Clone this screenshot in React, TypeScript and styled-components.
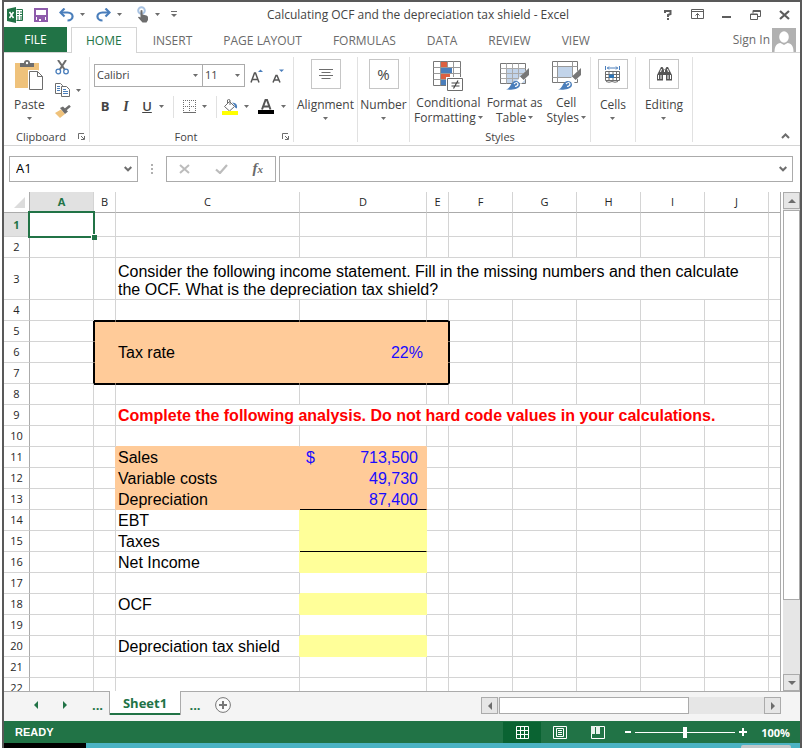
import React from "react";
import styled, { createGlobalStyle, css } from "styled-components";

const GREEN = "#217346";
const LINE = "#d4d4d4";
const BORDER = "#ababab";
const INK = "#444444";
const ORANGE = "#ffcb99";
const YELLOW = "#ffff99";
const BLUE = "#1a0dff";
const UI = '"Open Sans", "Noto Sans", sans-serif';
const SHEET = '"Liberation Sans", Arial, sans-serif';

const GlobalStyle = createGlobalStyle`
  *, *::before, *::after { box-sizing: border-box; }
  body { margin: 0; background: #ffffff; }
  button, input, select { font: inherit; color: inherit; margin: 0; }
  svg { display: block; flex: none; }
`;

/* ---------- frame ---------- */

const Frame = styled.div`
  height: 100vh;
  padding: 0 1px 1px 2px;
  font-family: ${UI};
  font-size: 12px;
  line-height: 15px;
  color: ${INK};
  overflow: hidden;
`;

const Window = styled.main`
  height: 100%;
  display: flex;
  flex-direction: column;
  background: #ffffff;
  border: solid #595959;
  border-width: 2px 2px 0 2px;
`;

const PlainButton = styled.button`
  display: flex;
  align-items: center;
  justify-content: center;
  padding: 0;
  border: 0;
  background: none;
  white-space: nowrap;
`;

/* ---------- title bar ---------- */

const TitleBar = styled.header`
  flex: none;
  display: flex;
  align-items: center;
  height: 25px;
`;

const QuickAccess = styled.div`
  display: flex;
  align-items: center;
  gap: 11px;
  width: 176px;
  padding-left: 3px;
`;

const QuickItem = styled.div`
  display: flex;
  align-items: center;
  gap: 6px;
`;

const Title = styled.h1`
  flex: 1;
  margin: 0;
  padding-right: 8px;
  font-size: 12px;
  font-weight: 400;
  text-align: center;
  white-space: nowrap;
`;

const WindowButtons = styled.div`
  display: flex;
  align-items: center;
  justify-content: space-between;
  width: 136px;
  padding: 0 10px 0 0;
`;

/* ---------- ribbon tabs ---------- */

const TabStrip = styled.nav`
  flex: none;
  display: flex;
  gap: 1px;
  height: 26px;
  border-bottom: 1px solid ${LINE};
`;

const FileTab = styled(PlainButton)`
  width: 63px;
  height: 25px;
  margin-right: 3px;
  background: ${GREEN};
  color: #ffffff;
`;

const RibbonTab = styled(PlainButton)<{ $active?: boolean }>`
  height: 26px;
  padding: 0 15px;
  color: #6a6a6a;
  ${(p) =>
    p.$active &&
    css`
      padding: 0 14px;
      color: ${GREEN};
      background: #ffffff;
      border: 1px solid ${LINE};
      border-bottom: 0;
    `}
`;

const Account = styled.a`
  display: flex;
  align-items: center;
  gap: 2px;
  height: 25px;
  margin-left: auto;
  padding-right: 4px;
  color: #6a6a6a;
  text-decoration: none;
  white-space: nowrap;
`;

/* ---------- ribbon ---------- */

const Ribbon = styled.section`
  flex: none;
  display: flex;
  height: 93px;
  padding: 4px 0 3px;
  border-bottom: 1px solid ${LINE};
`;

const Group = styled.div<{ $width: number }>`
  flex: none;
  display: flex;
  flex-direction: column;
  justify-content: space-between;
  width: ${(p) => p.$width}px;
  border-right: 1px solid #e1e1e1;
`;

const GroupBody = styled.div`
  display: flex;
  justify-content: center;
  gap: 4px;
`;

const GroupLabel = styled.div`
  display: flex;
  align-items: center;
  height: 12px;
  font-size: 11px;
  text-align: center;

  svg {
    margin-right: 4px;
  }
`;

const GroupName = styled.span`
  flex: 1;
`;

const ClipboardBody = styled.div`
  display: flex;
  gap: 10px;
  padding: 3px 0 0 10px;
`;

const PasteButton = styled(PlainButton)`
  flex-direction: column;
  gap: 6px;
  justify-content: flex-start;
`;

const IconStack = styled.div`
  display: flex;
  flex-direction: column;
  align-items: flex-start;
  gap: 8px;
`;

const FontBody = styled.div`
  display: flex;
  flex-direction: column;
  gap: 8px;
  padding: 7px 0 0 4px;
`;

const FontRow = styled.div`
  display: flex;
  align-items: center;
  height: 23px;
`;

const PickerBox = styled.label<{ $width: number }>`
  position: relative;
  display: flex;
  align-items: center;
  width: ${(p) => p.$width}px;
  height: 23px;
  margin-right: -1px;
  border: 1px solid ${BORDER};
  font-size: 11px;

  select {
    width: 100%;
    height: 100%;
    padding: 0 0 2px 2px;
    border: 0;
    background: transparent;
    appearance: none;
  }
  svg {
    position: absolute;
    right: 4px;
  }
`;

const SizeButtons = styled.div`
  display: flex;
  gap: 9px;
  padding-left: 6px;
`;

const FormatRow = styled(FontRow)`
  gap: 9px;
  padding-left: 5px;
`;

const FillGroup = styled.div`
  display: flex;
  align-items: center;
  gap: 5px;
`;

const StyleLetter = styled(PlainButton)<{ $kind: "bold" | "italic" | "underline" }>`
  width: 12px;
  font-size: 13px;
  font-weight: 700;
  ${(p) => p.$kind === "italic" && "font-family: 'Liberation Serif', serif; font-style: italic; font-size: 14px;"}
  ${(p) => p.$kind === "underline" && "text-decoration: underline; font-weight: 600;"}
`;

const VerticalRule = styled.span`
  width: 1px;
  height: 22px;
  background: #e1e1e1;
`;

const BoxedButton = styled(PlainButton)`
  flex-direction: column;
  gap: 8px;
  padding-top: 2px;
`;

const IconBox = styled.span`
  display: flex;
  align-items: center;
  justify-content: center;
  width: 30px;
  height: 30px;
  border: 1px solid #c6c6c6;
  font-size: 15px;
`;

const BoxedLabel = styled.span`
  display: flex;
  flex-direction: column;
  align-items: center;
  gap: 5px;
`;

const TallButton = styled(PlainButton)`
  flex-direction: column;
  gap: 4px;
  padding-top: 3px;
`;

const TallLabel = styled.span`
  display: block;
  text-align: center;
`;

const TallLine = styled.span`
  display: flex;
  align-items: center;
  justify-content: center;
  gap: 2px;
`;

const CollapseButton = styled(PlainButton)`
  align-self: flex-end;
  margin: 0 10px 0 auto;
  height: 12px;
`;

/* ---------- formula bar ---------- */

const FormulaBar = styled.section`
  flex: none;
  display: flex;
  align-items: center;
  padding: 10px 7px 10px 5px;
`;

const Field = styled.div<{ $width?: number }>`
  display: flex;
  align-items: center;
  ${(p) => (p.$width ? `width: ${p.$width}px;` : "flex: 1;")}
  height: 26px;
  padding: 0 5px 0 6px;
  border: 1px solid ${BORDER};

  input {
    flex: 1;
    min-width: 0;
    padding: 0 0 2px 0;
    border: 0;
    outline: 0;
    background: transparent;
    color: #000000;
    font-size: 13px;
  }
`;

const DotHandle = styled.span`
  display: flex;
  justify-content: center;
  width: 28px;
`;

const EntryButtons = styled.div`
  display: flex;
  align-items: center;
  justify-content: space-between;
  width: 110px;
  height: 26px;
  margin-right: 3px;
  padding: 0 12px;
  border: 1px solid ${BORDER};
`;

/* ---------- sheet ---------- */

const SheetArea = styled.section`
  flex: 1;
  min-height: 0;
  display: flex;
  gap: 2px;
  border-bottom: 1px solid ${BORDER};
`;

const GridClip = styled.div`
  flex: 1;
  min-width: 0;
  overflow: hidden;
  border-right: 1px solid ${BORDER};
`;

const Grid = styled.table`
  width: 100%;
  table-layout: fixed;
  border-collapse: separate;
  border-spacing: 0;
  font-family: ${SHEET};
  font-size: 16px;
  line-height: 18px;
  color: #000000;
`;

const Col = styled.col<{ $width?: number }>`
  ${(p) => p.$width && `width: ${p.$width}px;`}
`;

const Row = styled.tr<{ $height: number }>`
  height: ${(p) => p.$height}px;
`;

const HeadCell = styled.th<{ $on?: boolean; $side?: boolean }>`
  padding: 0;
  border-right: 1px solid ${(p) => (p.$side ? BORDER : LINE)};
  border-bottom: 1px solid ${(p) => (p.$side ? LINE : BORDER)};
  background: ${(p) => (p.$on ? "#e1e1e1" : "#ffffff")};
  color: ${(p) => (p.$on ? GREEN : "#262626")};
  font-family: ${UI};
  font-size: 11px;
  font-weight: ${(p) => (p.$on ? 700 : 400)};
  line-height: 14px;
  text-align: center;

  &:last-child {
    border-right: 0;
  }
`;

const CornerCell = styled.td`
  padding: 0 4px 0 0;
  border-right: 1px solid ${BORDER};
  border-bottom: 1px solid ${BORDER};

  svg {
    margin-left: auto;
  }
`;

type CellStyle = {
  $fill?: string;
  $ink?: string;
  $bold?: boolean;
  $align?: "left" | "right";
  $inset?: number;
  $t?: string;
  $r?: string;
  $b?: string;
  $l?: string;
};

const Cell = styled.td<CellStyle>`
  position: relative;
  padding: 0 ${(p) => p.$inset ?? 3}px 0 2px;
  background: ${(p) => p.$fill ?? "transparent"};
  color: ${(p) => p.$ink ?? "#000000"};
  font-weight: ${(p) => (p.$bold ? 700 : 400)};
  text-align: ${(p) => p.$align ?? "left"};
  vertical-align: bottom;
  white-space: nowrap;
  border-right: 1px solid ${(p) => p.$r ?? LINE};
  border-bottom: 1px solid ${(p) => p.$b ?? LINE};
  ${(p) => p.$t && `border-top: 1px solid ${p.$t};`}
  ${(p) => p.$l && `border-left: 1px solid ${p.$l};`}

  &:last-child {
    border-right: 0;
  }
`;

const Accounting = styled.span`
  display: flex;
  justify-content: space-between;
  padding-left: 4px;
`;

const Selection = styled.span`
  position: absolute;
  z-index: 1;
  inset: -2px;
  border: 2px solid ${GREEN};

  &::after {
    content: "";
    position: absolute;
    right: -4px;
    bottom: -4px;
    width: 6px;
    height: 6px;
    background: ${GREEN};
    border: solid #ffffff;
    border-width: 1px 0 0 1px;
  }
`;

const ScrollColumn = styled.div`
  display: flex;
  flex-direction: column;
  width: 17px;
  background: #e6e6e6;
`;

const ScrollButton = styled(PlainButton)`
  flex: none;
  width: 17px;
  height: 17px;
  border: 1px solid ${BORDER};
  background: #e6e6e6;
`;

const ScrollTrack = styled.div<{ $row?: boolean }>`
  flex: 1;
  display: flex;
  flex-direction: ${(p) => (p.$row ? "row" : "column")};
  padding: ${(p) => (p.$row ? "0 0 0 1px" : "1px 0 0")};
`;

const ScrollThumb = styled.div<{ $size: string }>`
  flex: 0 0 ${(p) => p.$size};
  background: #ffffff;
  border: 1px solid ${BORDER};
`;

/* ---------- sheet tabs ---------- */

const SheetBar = styled.section`
  flex: none;
  display: flex;
  height: 29px;
  padding: 0 19px 0 24px;
  background: #f4f4f4;
  color: ${GREEN};
  font-size: 13px;
  font-weight: 700;
`;

const NavButton = styled(PlainButton)<{ $width: number }>`
  width: ${(p) => p.$width}px;
  height: 26px;
`;

const SheetTab = styled(PlainButton)`
  width: 72px;
  height: 24px;
  margin-top: -1px;
  background: #ffffff;
  border: solid ${BORDER};
  border-width: 0 1px;
  box-shadow: inset 0 -2px 0 ${GREEN};
`;

const ScrollRow = styled.div`
  display: flex;
  width: 300px;
  height: 17px;
  margin: 5px 0 0 auto;
  background: #e6e6e6;
`;

/* ---------- status bar ---------- */

const StatusBar = styled.footer`
  flex: none;
  display: flex;
  align-items: center;
  height: 22px;
  padding: 0 10px 0 11px;
  background: ${GREEN};
  color: #ffffff;
  font-size: 11px;
`;

const Ready = styled.span`
  margin-right: auto;
  font-family: ${SHEET};
  font-weight: 700;
`;

const ViewButton = styled(PlainButton)<{ $on?: boolean }>`
  width: 38px;
  height: 21px;
  background: ${(p) => (p.$on ? "#0a6332" : "transparent")};
`;

const ZoomControl = styled.div`
  display: flex;
  align-items: center;
  gap: 4px;
  margin-left: 8px;
`;

const ZoomRange = styled.input`
  width: 100px;
  height: 12px;
  appearance: none;
  background: linear-gradient(#ffffff, #ffffff) center / 100% 1px no-repeat;

  &::-webkit-slider-thumb {
    appearance: none;
    width: 4px;
    height: 11px;
    background: #ffffff;
  }
`;

const ZoomValue = styled.span`
  width: 43px;
  font-weight: 700;
  text-align: right;
`;

const Desktop = styled.div`
  flex: none;
  display: flex;
  justify-content: space-between;
  align-items: flex-end;
  height: 5px;
  padding-right: 9px;
  background: linear-gradient(90deg, #000000 82px, #4bb3c3 82px);

  &::after {
    content: "";
    width: 50px;
    height: 3px;
    margin-left: auto;
    border-radius: 2px 2px 0 0;
    background: #c3c8ca;
  }
`;

/* ---------- icons ---------- */

const Caret = ({ color = "#6d6d6d" }: { color?: string }) => (
  <svg width="5" height="3" viewBox="0 0 5 3"><path d="M0 0h5L2.500 3z" fill={color} /></svg>
);

const ExcelIcon = () => (
  <svg width="16" height="16" viewBox="0 0 16 16">
    <path d="M0 2 9 0v16L0 14z" fill={GREEN} />
    <path d="M9.500 2.500h6v11h-6" fill="#fff" stroke={GREEN} />
    <path d="M10 5h2M13 5h2M10 7.500h2M13 7.500h2M10 10h2M13 10h2M10 12h2M13 12h2" stroke={GREEN} strokeWidth="1.200" />
    <path d="M2.500 5 6.500 11M6.500 5 2.500 11" stroke="#fff" strokeWidth="1.500" />
  </svg>
);

const SaveIcon = () => (
  <svg width="14" height="14" viewBox="0 0 14 14">
    <path d="M1 1h12v12H1z" fill="#fff" stroke="#8e5bab" strokeWidth="2" />
    <path d="M1 8h12" stroke="#8e5bab" strokeWidth="2" />
    <path d="M3 9h8v5H3z" fill="#8e5bab" />
    <path d="M5 11h2v2H5z" fill="#fff" />
  </svg>
);

const UndoIcon = ({ flip }: { flip?: boolean }) => (
  <svg width="15" height="14" viewBox="0 0 15 14">
    <g transform={flip ? "matrix(-1 0 0 1 15 0)" : undefined} fill="none" stroke="#4a7ebb" strokeWidth="2.200">
      <path d="M5.500 0.500 1.500 4.500 5.500 8.500" />
      <path d="M2 4.500h6.500c7 0 6.500 8 0 8" />
    </g>
  </svg>
);

const TouchIcon = () => (
  <svg width="16" height="17" viewBox="-4 0 16 17">
    <circle cx="4.500" cy="4.500" r="3.300" fill="none" stroke="#a9c3e2" strokeWidth="2" />
    <path d="M3.500 4.500q1-1 2 0v4l4 1q1.500.5 1.500 2V14l-1.500 2.500h-4L1 11.500q.5-1.500 2.500 0z" fill="#6d6d6d" />
  </svg>
);

const CustomizeIcon = () => (
  <svg width="6" height="7" viewBox="0 0 6 7"><path d="M0 .5h6" stroke="#6d6d6d" /><path d="M0 3h6L3 6z" fill="#6d6d6d" /></svg>
);

const HelpIcon = () => (
  <svg width="8" height="10" viewBox="0 0 8 10">
    <path d="M1 3V1h5.500v3L4 5v2" fill="none" stroke="#5d5d5d" strokeWidth="2" /><path d="M3 8h2v2H3z" fill="#5d5d5d" />
  </svg>
);

const RibbonOptionsIcon = () => (
  <svg width="13" height="11" viewBox="0 0 13 11" fill="none" stroke="#5d5d5d">
    <path d="M.5.5h12v9H.5zM.5 2.500h12M6.500 9V4.500M4.500 6.500l2-2 2 2" />
  </svg>
);

const MinimizeIcon = () => (
  <svg width="9" height="8" viewBox="0 0 9 8"><path d="M0 5h9v2H0z" fill="#5d5d5d" /></svg>
);

const RestoreIcon = () => (
  <svg width="11" height="10" viewBox="0 0 11 10" fill="none" stroke="#5d5d5d">
    <path d="M.5 4h7v5.500h-7zM.5 4.500h7" /><path d="M3 3.500V.5h7.500v6H8M3 1.500h7.500" />
  </svg>
);

const CloseIcon = () => (
  <svg width="11" height="10" viewBox="0 0 11 10"><path d="M1 1l9 8M10 1 1 9" stroke="#5d5d5d" strokeWidth="2.200" /></svg>
);

const AvatarIcon = () => (
  <svg width="24" height="24" viewBox="0 0 24 24">
    <path d="M0 0h24v24H0z" fill="#b1b1b1" />
    <ellipse cx="12" cy="9" rx="4.800" ry="5.800" fill="#fff" />
    <path d="M2.500 24c0-6 2-8.500 6-9l3.500 2 3.500-2c4 .5 6 3 6 9z" fill="#fff" />
  </svg>
);

const PasteIcon = () => (
  <svg width="29" height="31" viewBox="0 0 29 31">
    <path d="M0 3h24v25H0z" fill="#efc27b" />
    <path d="M5 7V3h4q0-3 3-3t3 3h4v4z" fill="#6d6d6d" />
    <circle cx="12" cy="3" r="1.200" fill="#fff" />
    <path d="M14.500 11.500h8l5 5v13h-13z" fill="#fff" stroke="#fff" strokeWidth="3" />
    <path d="M14.500 11.500h8l5 5v13h-13zM22.500 11.500v5h5" fill="#fff" stroke="#6d6d6d" />
  </svg>
);

const CutIcon = () => (
  <svg width="15" height="15" viewBox="0 0 15 15" fill="none">
    <path d="M3 0 10 10M11 0 4.500 10" stroke="#6d6d6d" strokeWidth="2" />
    <circle cx="3.300" cy="11.500" r="2.300" stroke="#4a7ebb" strokeWidth="1.300" />
    <circle cx="11" cy="11.500" r="2.300" stroke="#4a7ebb" strokeWidth="1.300" />
  </svg>
);

const CopyIcon = () => (
  <svg width="15" height="14" viewBox="0 0 15 14" fill="#fff" stroke="#6d6d6d">
    <path d="M.5.5h5l2 2v8h-7z" /><path d="M2 3.500h3M2 5.500h3M2 7.500h3" stroke="#4a7ebb" />
    <path d="M6.500 3.500h5l3 3v7h-8z" /><path d="M8 6.500h3M8 8.500h5M8 10.500h5" stroke="#4a7ebb" />
  </svg>
);

const PainterIcon = () => (
  <svg width="16" height="13" viewBox="0 0 16 13">
    <path d="M0 8 6 4.500l4 4.500-5 4z" fill="#efc27b" />
    <path d="M5 3 8 1.500l5 5L10 9z" fill="#6d6d6d" />
    <path d="M10.500 4.500 15 .8" stroke="#6d6d6d" strokeWidth="2.500" />
  </svg>
);

const LauncherIcon = () => (
  <svg width="7" height="7" viewBox="0 0 7 7" fill="none" stroke="#6d6d6d"><path d="M.5 6V.5H6M3 3l3 3M6.500 3v3.500H3" /></svg>
);

const SizeIcon = ({ up }: { up?: boolean }) => (
  <svg width={up ? 13 : 12} height="14" viewBox={up ? "0 0 13 14" : "0 0 12 14"}>
    <path d={up ? "M1 13.500 4.500 4h1L9 13.500M2.500 10.500h5" : "M1 13.500 4 6.500h1L8 13.500M2.500 11h4.500"} fill="none" stroke="#555" strokeWidth="1.500" />
    <path d={up ? "M8 3h5L10.500.5z" : "M7 .5h5L9.500 3z"} fill="#4a7ebb" />
  </svg>
);

const BordersIcon = () => (
  <svg width="13" height="13" viewBox="0 0 13 13" stroke="#6d6d6d">
    <path d="M0 .5h13M0 6.500h13M.5 0v12M6.500 0v12M12.500 0v12" strokeDasharray="1 1" /><path d="M0 12.500h13" />
  </svg>
);

const FillIcon = () => (
  <svg width="17" height="16" viewBox="0 0 17 16">
    <path d="M2.500 7.500 7.500 2.500l5 5-5 4.500z" fill="#fff" stroke="#6d6d6d" />
    <path d="M5.500 5V1q1-1 2.500 0v5" fill="none" stroke="#6d6d6d" />
    <path d="M10 3.500q6 0 5 6l-2-1q0-3-3-5z" fill="#4a7ebb" />
    <path d="M0 12h16v4H0z" fill="#ffff00" />
  </svg>
);

const FontColorIcon = () => (
  <svg width="17" height="15" viewBox="0 0 17 15">
    <path d="M4 10.500 7.500 1h1.500l3.500 9.500M5.500 7.500h6" fill="none" stroke="#555" strokeWidth="2" />
    <path d="M0 11h16v4H0z" fill="#000" />
  </svg>
);

const AlignIcon = () => (
  <svg width="14" height="12" viewBox="0 0 14 12"><path d="M0 1.500h14M2.500 4.500h9M0 7.500h14M2.500 10.500h9" stroke="#6d6d6d" /></svg>
);

const ConditionalIcon = () => (
  <svg width="31" height="31" viewBox="0 0 31 31">
    <path d="M.5 1.500h27v24H.5z" fill="#fff" stroke="#777" />
    <path d="M8 2h6v5H8zM8 14h9v5H8z" fill="#dc6040" />
    <path d="M8 8h11v5H8zM8 20h5v5H8z" fill="#4a7ebb" />
    <path d="M.5 7.500h27M.5 13.500h27M.5 19.500h27M7.500 1.500v24M14.500 1.500v6M20.500 1.500v24" fill="none" stroke="#999" />
    <path d="M14.500 18.500h15v12h-15z" fill="#fff" stroke="#fff" strokeWidth="3" />
    <path d="M14.500 18.500h15v12h-15z" fill="#fff" stroke="#6d6d6d" />
    <path d="M18.500 23h8M18.500 26h8M25 20.500l-4.500 8" stroke="#444" strokeWidth="1.200" />
  </svg>
);

const Brush = () => (
  <>
    <path d="M31 5.500 18 21l4 3L31 14z" fill="#fff" />
    <path d="M30 8v7l-5.500 5-3.500-3.500z" fill="#777" />
    <path d="M20.500 17.500l3.500 3.500" stroke="#fff" strokeWidth="1.500" />
    <path d="M7 29.500c5-1 4-7 9-8.500 4-.5 6 3 4.500 5.500-2 3-8 3.500-13.500 3z" fill="#4a7ebb" />
    <path d="M15 24q3-3 4 0 0 2-3 2.500" fill="none" stroke="#fff" strokeWidth="1.200" />
  </>
);

const FormatTableIcon = () => (
  <svg width="31" height="31" viewBox="0 0 31 31">
    <path d="M1.500 3.500h25v20h-25z" fill="#fff" stroke="#777" />
    <path d="M8 9h18v14H8z" fill="#c2d4ea" />
    <path d="M1.500 8.500h25M1.500 13.500h25M1.500 18.500h25M7.500 3.500v20M13.500 3.500v20M19.500 3.500v20" stroke="#aaa" />
    <Brush />
  </svg>
);

const CellStylesIcon = () => (
  <svg width="31" height="31" viewBox="0 0 31 31">
    <path d="M1.500 1.500h25v21h-25z" fill="#fff" stroke="#777" />
    <path d="M7 7h14v10H7z" fill="#c2d4ea" />
    <path d="M1.500 6.500h25M1.500 17.500h25M6.500 1.500v21M21.500 1.500v21" stroke="#999" />
    <Brush />
  </svg>
);

const CellsIcon = () => (
  <svg width="16" height="17" viewBox="0 0 16 17" fill="none">
    <path d="M.5 0v4M14.500 0v4M2 2h11M4 .5 2.500 2 4 3.500M11 .5 12.500 2 11 3.500" stroke="#4a7ebb" />
    <path d="M.5 5.500h14v9H.5zM.5 8.500h14M.5 11.500h14M4 5.500v9M8 5.500v9M11.500 5.500v9M1 15.500q3 1.500 6 0 3 1.500 6 0" stroke="#6d6d6d" />
    <path d="M4 8.500h5V12H4z" fill="#2e75b6" />
  </svg>
);

const FindIcon = () => (
  <svg width="15" height="14" viewBox="0 0 15 14">
    <path d="M3 2 4 0h1.500L6.500 1.500v1h2v-1L9.500 0H11l1 2 3 6v5.500H9V8H6v5.500H0V8z" fill="#555" />
    <path d="M1.500 8v4M4 8v4M11 8v4M13.500 8v4M7.500 3v2M4.500 2 3.500 5M10.500 2l1 3" stroke="#fff" />
  </svg>
);

const CollapseIcon = () => (
  <svg width="9" height="6" viewBox="0 0 9 6"><path d="M1 5l3.500-3.500L8 5" fill="none" stroke="#6d6d6d" strokeWidth="2" /></svg>
);

const ChevronIcon = () => (
  <svg width="8" height="6" viewBox="0 0 8 6"><path d="M.7 1 4 4.300 7.300 1" fill="none" stroke="#6d6d6d" strokeWidth="2" /></svg>
);

const DotsIcon = () => (
  <svg width="2" height="10" viewBox="0 0 2 10"><path d="M0 0h2v2H0zM0 4h2v2H0zM0 8h2v2H0z" fill="#b0b0b0" /></svg>
);

const CancelIcon = () => (
  <svg width="11" height="10" viewBox="0 0 11 10"><path d="M1 1l9 8M10 1 1 9" stroke="#bcbcbc" strokeWidth="2" /></svg>
);

const ConfirmIcon = () => (
  <svg width="13" height="10" viewBox="0 0 13 10"><path d="M1 5.500 5 9l7-8" fill="none" stroke="#bcbcbc" strokeWidth="2.200" /></svg>
);

const FunctionMark = styled.span`
  font-family: "Liberation Serif", serif;
  font-size: 15px;
  font-style: italic;
  font-weight: 700;
  color: #6a6a6a;

  small {
    font-size: 11px;
  }
`;

const Triangle = ({ d, color = "#6d6d6d" }: { d: "up" | "down" | "left" | "right"; color?: string }) => {
  const paths = { up: "M0 6h8L4 2z", down: "M0 2h8L4 6z", left: "M6 0v8L2 4z", right: "M2 0v8l4-4z" };
  return <svg width="8" height="8" viewBox="0 0 8 8"><path d={paths[d]} fill={color} /></svg>;
};

const AddIcon = () => (
  <svg width="16" height="16" viewBox="0 0 16 16" fill="none" stroke="#777">
    <circle cx="8" cy="8" r="7.400" fill="#fafafa" /><path d="M8 4v8M4 8h8" strokeWidth="2" />
  </svg>
);

const NormalViewIcon = () => (
  <svg width="13" height="13" viewBox="0 0 13 13" fill="none" stroke="#fff"><path d="M.5.500h12v12H.5zM.5 4.500h12M.5 8.500h12M4.500.500v12M8.500.500v12" /></svg>
);

const PageViewIcon = () => (
  <svg width="14" height="13" viewBox="0 0 14 13" fill="none" stroke="#fff"><path d="M.5.500h13v12H.5zM3.500 2.500h7v8h-7zM5 4.500h4M5 6.500h4M5 8.500h4" /></svg>
);

const BreakViewIcon = () => (
  <svg width="14" height="13" viewBox="0 0 14 13"><path d="M.5.500h13v12H.5z" fill="none" stroke="#fff" /><path d="M0 0h4v8H0zM5 0h4v8H5z" fill="#e9f1ec" /></svg>
);

const MinusIcon = () => <svg width="6" height="2" viewBox="0 0 6 2"><path d="M0 0h6v2H0z" fill="#fff" /></svg>;
const PlusIcon = () => <svg width="8" height="8" viewBox="0 0 8 8"><path d="M3 0h2v3h3v2H5v3H3V5H0V3h3z" fill="#fff" /></svg>;

/* ---------- sheet data ---------- */

type CellSpec = CellStyle & { text?: React.ReactNode; span?: number };

const COLUMNS: [string, number | undefined][] = [
  ["A", 64], ["B", 22], ["C", 184], ["D", 127], ["E", 22],
  ["F", 64], ["G", 64], ["H", 64], ["I", 64], ["J", 64], ["", undefined],
];

const BLACK = "#000000";
const input = { $fill: ORANGE, $r: ORANGE, $b: ORANGE };
const amount = (text: React.ReactNode): CellSpec => ({ ...input, text, $ink: BLUE, $align: "right", $inset: 8 });
const answer: CellSpec = { $fill: YELLOW, $r: YELLOW, $b: YELLOW };
const beforeAnswer = (text: string): CellSpec => ({ text, $r: YELLOW });

const boxRow = (pos: "top" | "middle" | "bottom", c: CellSpec = {}, d: CellSpec = {}): Record<string, CellSpec> => {
  const edge: CellStyle = {
    $fill: ORANGE,
    $r: ORANGE,
    $b: pos === "bottom" ? BLACK : ORANGE,
    $t: pos === "top" ? BLACK : undefined,
  };
  return {
    A: { $r: BLACK },
    B: { ...edge, $l: BLACK },
    C: { ...edge, ...c },
    D: { ...edge, ...d },
    E: { ...edge, $r: BLACK },
    F: { $l: BLACK },
  };
};

const under = (color: string, keys: string): Record<string, CellSpec> =>
  Object.fromEntries([...keys].map((k) => [k, { $b: color }]));

const CELLS: Record<number, Record<string, CellSpec>> = {
  1: { A: { text: <Selection /> } },
  3: {
    C: {
      span: 8,
      text: (
        <>
          Consider the following income statement. Fill in the missing numbers and then calculate
          <br />
          the OCF. What is the depreciation tax shield?
        </>
      ),
    },
  },
  4: under(BLACK, "BCDE"),
  5: boxRow("top"),
  6: boxRow("middle", { text: "Tax rate" }, { text: "22%", $ink: BLUE, $align: "right" }),
  7: boxRow("bottom"),
  8: Object.fromEntries([..."BCDE"].map((k) => [k, { $t: BLACK }])),
  9: {
    C: { span: 8, $ink: "#ff0000", $bold: true, text: "Complete the following analysis. Do not hard code values in your calculations." },
  },
  10: under(ORANGE, "CD"),
  11: {
    B: { $r: ORANGE },
    C: { ...input, text: "Sales" },
    D: amount(<Accounting><span>$</span><span>713,500</span></Accounting>),
  },
  12: { B: { $r: ORANGE }, C: { ...input, text: "Variable costs" }, D: amount("49,730") },
  13: { B: { $r: ORANGE }, C: { ...input, text: "Depreciation" }, D: { ...amount("87,400"), $b: BLACK } },
  14: { C: beforeAnswer("EBT"), D: answer },
  15: { C: beforeAnswer("Taxes"), D: { ...answer, $b: BLACK } },
  16: { C: beforeAnswer("Net Income"), D: answer },
  17: under(YELLOW, "D"),
  18: { C: beforeAnswer("OCF"), D: answer },
  19: under(YELLOW, "D"),
  20: { C: beforeAnswer("Depreciation tax shield"), D: answer },
};

const ROW_HEIGHTS: Record<number, number> = { 1: 24, 3: 42 };

const Worksheet = () => (
  <Grid aria-label="Sheet1">
    <colgroup>
      <Col $width={26} />
      {COLUMNS.map(([name, width]) => <Col key={name} $width={width} />)}
    </colgroup>
    <thead>
      <Row $height={21}>
        <CornerCell><svg width="11" height="11" viewBox="0 0 11 11"><path d="M11 0v11H0z" fill="#dcdcdc" /></svg></CornerCell>
        {COLUMNS.map(([name]) => <HeadCell key={name} scope="col" $on={name === "A"}>{name}</HeadCell>)}
      </Row>
    </thead>
    <tbody>
      {Array.from({ length: 22 }, (_, i) => i + 1).map((n) => {
        const cells = CELLS[n] ?? {};
        let skip = 0;
        return (
          <Row key={n} $height={ROW_HEIGHTS[n] ?? 21}>
            <HeadCell scope="row" $side $on={n === 1}>{n}</HeadCell>
            {COLUMNS.map(([name]) => {
              if (skip > 0) {
                skip -= 1;
                return null;
              }
              const { text, span, ...look } = cells[name] ?? {};
              skip = (span ?? 1) - 1;
              return <Cell key={name} colSpan={span} {...look}>{text}</Cell>;
            })}
          </Row>
        );
      })}
    </tbody>
  </Grid>
);

/* ---------- app ---------- */

const TABS = ["HOME", "INSERT", "PAGE LAYOUT", "FORMULAS", "DATA", "REVIEW", "VIEW"];

const BoxedGroup = ({ name, width, icon }: { name: string; width: number; icon: React.ReactNode }) => (
  <Group $width={width}>
    <BoxedButton>
      <IconBox>{icon}</IconBox>
      <BoxedLabel>{name}<Caret /></BoxedLabel>
    </BoxedButton>
  </Group>
);

const StyleButton = ({ first, second, icon }: { first: string; second: string; icon: React.ReactNode }) => (
  <TallButton>
    {icon}
    <TallLabel>
      {first}
      <TallLine>{second}<Caret /></TallLine>
    </TallLabel>
  </TallButton>
);

export default function App() {
  return (
    <Frame>
      <GlobalStyle />
      <Window>
        <TitleBar>
          <QuickAccess>
            <ExcelIcon />
            <PlainButton aria-label="Save"><SaveIcon /></PlainButton>
            <QuickItem><PlainButton aria-label="Undo"><UndoIcon /></PlainButton><Caret /></QuickItem>
            <QuickItem><PlainButton aria-label="Redo"><UndoIcon flip /></PlainButton><Caret /></QuickItem>
            <QuickItem><PlainButton aria-label="Touch mode"><TouchIcon /></PlainButton><Caret /></QuickItem>
            <PlainButton aria-label="Customize toolbar"><CustomizeIcon /></PlainButton>
          </QuickAccess>
          <Title>Calculating OCF and the depreciation tax shield - Excel</Title>
          <WindowButtons>
            <PlainButton aria-label="Help"><HelpIcon /></PlainButton>
            <PlainButton aria-label="Ribbon options"><RibbonOptionsIcon /></PlainButton>
            <PlainButton aria-label="Minimize"><MinimizeIcon /></PlainButton>
            <PlainButton aria-label="Restore"><RestoreIcon /></PlainButton>
            <PlainButton aria-label="Close"><CloseIcon /></PlainButton>
          </WindowButtons>
        </TitleBar>

        <TabStrip>
          <FileTab>FILE</FileTab>
          {TABS.map((tab) => <RibbonTab key={tab} $active={tab === "HOME"}>{tab}</RibbonTab>)}
          <Account href="#sign-in">Sign In<AvatarIcon /></Account>
        </TabStrip>

        <Ribbon>
          <Group $width={86}>
            <ClipboardBody>
              <PasteButton><PasteIcon /><BoxedLabel>Paste<Caret /></BoxedLabel></PasteButton>
              <IconStack>
                <PlainButton aria-label="Cut"><CutIcon /></PlainButton>
                <QuickItem><PlainButton aria-label="Copy"><CopyIcon /></PlainButton><Caret /></QuickItem>
                <PlainButton aria-label="Format painter"><PainterIcon /></PlainButton>
              </IconStack>
            </ClipboardBody>
            <GroupLabel><GroupName>Clipboard</GroupName><LauncherIcon /></GroupLabel>
          </Group>

          <Group $width={204}>
            <FontBody>
              <FontRow>
                <PickerBox $width={109}>
                  <select aria-label="Font"><option>Calibri</option></select><Caret />
                </PickerBox>
                <PickerBox $width={43}>
                  <select aria-label="Font size"><option>11</option></select><Caret />
                </PickerBox>
                <SizeButtons>
                  <PlainButton aria-label="Increase font size"><SizeIcon up /></PlainButton>
                  <PlainButton aria-label="Decrease font size"><SizeIcon /></PlainButton>
                </SizeButtons>
              </FontRow>
              <FormatRow>
                <StyleLetter $kind="bold">B</StyleLetter>
                <StyleLetter $kind="italic">I</StyleLetter>
                <QuickItem><StyleLetter $kind="underline">U</StyleLetter><Caret /></QuickItem>
                <VerticalRule />
                <QuickItem><PlainButton aria-label="Borders"><BordersIcon /></PlainButton><Caret /></QuickItem>
                <FillGroup>
                  <VerticalRule />
                  <PlainButton aria-label="Fill color"><FillIcon /></PlainButton>
                  <Caret />
                </FillGroup>
                <QuickItem><PlainButton aria-label="Font color"><FontColorIcon /></PlainButton><Caret /></QuickItem>
              </FormatRow>
            </FontBody>
            <GroupLabel><GroupName>Font</GroupName><LauncherIcon /></GroupLabel>
          </Group>

          <BoxedGroup name="Alignment" width={64} icon={<AlignIcon />} />
          <BoxedGroup name="Number" width={52} icon="%" />

          <Group $width={181}>
            <GroupBody>
              <StyleButton first="Conditional" second="Formatting" icon={<ConditionalIcon />} />
              <StyleButton first="Format as" second="Table" icon={<FormatTableIcon />} />
              <StyleButton first="Cell" second="Styles" icon={<CellStylesIcon />} />
            </GroupBody>
            <GroupLabel><GroupName>Styles</GroupName></GroupLabel>
          </Group>

          <BoxedGroup name="Cells" width={45} icon={<CellsIcon />} />
          <BoxedGroup name="Editing" width={57} icon={<FindIcon />} />
          <CollapseButton aria-label="Collapse ribbon"><CollapseIcon /></CollapseButton>
        </Ribbon>

        <FormulaBar>
          <Field $width={129}>
            <input aria-label="Name box" defaultValue="A1" />
            <PlainButton aria-label="Show names"><ChevronIcon /></PlainButton>
          </Field>
          <DotHandle><DotsIcon /></DotHandle>
          <EntryButtons>
            <PlainButton aria-label="Cancel"><CancelIcon /></PlainButton>
            <PlainButton aria-label="Enter"><ConfirmIcon /></PlainButton>
            <PlainButton aria-label="Insert function"><FunctionMark>f<small>x</small></FunctionMark></PlainButton>
          </EntryButtons>
          <Field>
            <input aria-label="Formula" />
            <PlainButton aria-label="Expand formula bar"><ChevronIcon /></PlainButton>
          </Field>
        </FormulaBar>

        <SheetArea>
          <GridClip><Worksheet /></GridClip>
          <ScrollColumn>
            <ScrollButton aria-label="Scroll up"><Triangle d="up" /></ScrollButton>
            <ScrollTrack><ScrollThumb $size="84%" /></ScrollTrack>
            <ScrollButton aria-label="Scroll down"><Triangle d="down" /></ScrollButton>
          </ScrollColumn>
        </SheetArea>

        <SheetBar>
          <NavButton $width={16} aria-label="Previous sheet"><Triangle d="left" color={GREEN} /></NavButton>
          <NavButton $width={42} aria-label="Next sheet"><Triangle d="right" color={GREEN} /></NavButton>
          <NavButton $width={23}>...</NavButton>
          <SheetTab>Sheet1</SheetTab>
          <NavButton $width={28}>...</NavButton>
          <NavButton $width={28} aria-label="New sheet"><AddIcon /></NavButton>
          <ScrollRow>
            <ScrollButton aria-label="Scroll left"><Triangle d="left" /></ScrollButton>
            <ScrollTrack $row><ScrollThumb $size="190px" /></ScrollTrack>
            <ScrollButton aria-label="Scroll right"><Triangle d="right" /></ScrollButton>
          </ScrollRow>
        </SheetBar>

        <StatusBar>
          <Ready>READY</Ready>
          <ViewButton $on aria-label="Normal view"><NormalViewIcon /></ViewButton>
          <ViewButton aria-label="Page layout view"><PageViewIcon /></ViewButton>
          <ViewButton aria-label="Page break view"><BreakViewIcon /></ViewButton>
          <ZoomControl>
            <PlainButton aria-label="Zoom out"><MinusIcon /></PlainButton>
            <ZoomRange type="range" aria-label="Zoom" min={0} max={200} defaultValue={100} />
            <PlainButton aria-label="Zoom in"><PlusIcon /></PlainButton>
          </ZoomControl>
          <ZoomValue>100%</ZoomValue>
        </StatusBar>
        <Desktop />
      </Window>
    </Frame>
  );
}
